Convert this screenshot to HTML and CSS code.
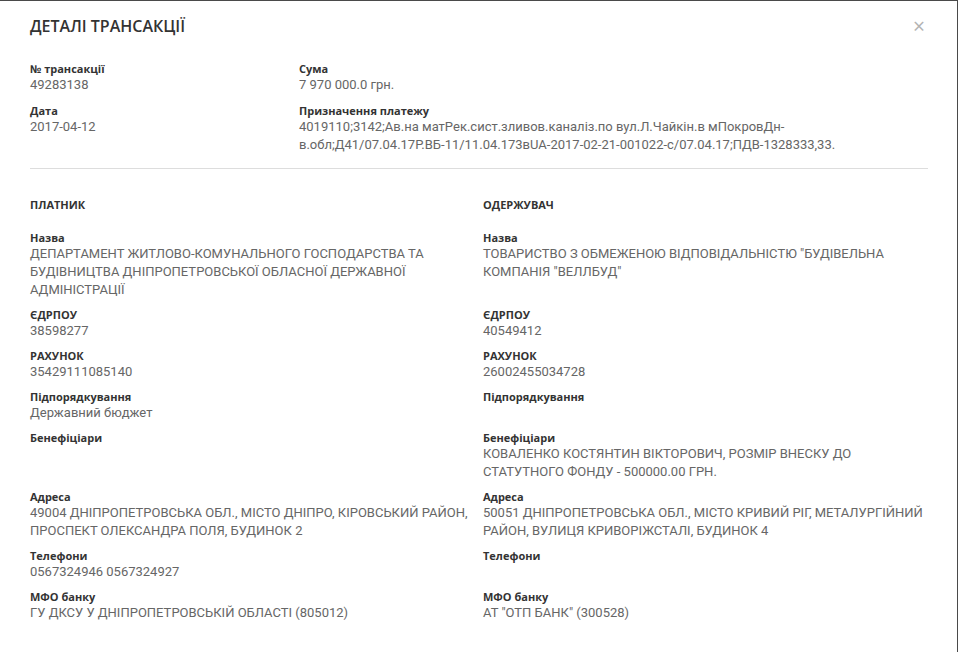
FILE: index.html
```html
<!DOCTYPE html>
<html lang="uk">
<head>
    <meta charset="UTF-8">
    <meta name="viewport" content="width=device-width, initial-scale=1.0">
    <title>Деталі трансакції</title>
    <link rel="stylesheet" href="styles.css">
</head>
<body>
    <div class="modal">
        <div class="modal-header">
            <h2 class="modal-title">ДЕТАЛІ ТРАНСАКЦІЇ</h2>
            <button class="close">&times;</button>
        </div>

        <div class="summary">
            <div class="summary-col">
                <div class="field">
                    <div class="label">№ трансакції</div>
                    <div class="value">49283138</div>
                </div>
                <div class="field">
                    <div class="label">Дата</div>
                    <div class="value">2017-04-12</div>
                </div>
            </div>
            <div class="summary-col">
                <div class="field">
                    <div class="label">Сума</div>
                    <div class="value">7 970 000.0 грн.</div>
                </div>
                <div class="field">
                    <div class="label">Призначення платежу</div>
                    <div class="value">4019110;3142;Ав.на матРек.сист.зливов.каналіз.по вул.Л.Чайкін.в мПокровДн-в.обл;Д41/07.04.17Р.ВБ-11/11.04.173вUA-2017-02-21-001022-с/07.04.17;ПДВ-1328333,33.</div>
                </div>
            </div>
        </div>

        <hr class="divider">

        <div class="parties">
            <div class="party-title">ПЛАТНИК</div>
            <div class="party-title">ОДЕРЖУВАЧ</div>

            <div class="field">
                <div class="label">Назва</div>
                <div class="value">ДЕПАРТАМЕНТ ЖИТЛОВО-КОМУНАЛЬНОГО ГОСПОДАРСТВА ТА БУДІВНИЦТВА ДНІПРОПЕТРОВСЬКОЇ ОБЛАСНОЇ ДЕРЖАВНОЇ АДМІНІСТРАЦІЇ</div>
            </div>
            <div class="field">
                <div class="label">Назва</div>
                <div class="value">ТОВАРИСТВО З ОБМЕЖЕНОЮ ВІДПОВІДАЛЬНІСТЮ "БУДІВЕЛЬНА КОМПАНІЯ "ВЕЛЛБУД"</div>
            </div>

            <div class="field">
                <div class="label">ЄДРПОУ</div>
                <div class="value">38598277</div>
            </div>
            <div class="field">
                <div class="label">ЄДРПОУ</div>
                <div class="value">40549412</div>
            </div>

            <div class="field">
                <div class="label">РАХУНОК</div>
                <div class="value">35429111085140</div>
            </div>
            <div class="field">
                <div class="label">РАХУНОК</div>
                <div class="value">26002455034728</div>
            </div>

            <div class="field">
                <div class="label">Підпорядкування</div>
                <div class="value">Державний бюджет</div>
            </div>
            <div class="field">
                <div class="label">Підпорядкування</div>
                <div class="value"></div>
            </div>

            <div class="field">
                <div class="label">Бенефіціари</div>
                <div class="value"></div>
            </div>
            <div class="field">
                <div class="label">Бенефіціари</div>
                <div class="value">КОВАЛЕНКО КОСТЯНТИН ВІКТОРОВИЧ, РОЗМІР ВНЕСКУ ДО СТАТУТНОГО ФОНДУ - 500000.00 ГРН.</div>
            </div>

            <div class="field">
                <div class="label">Адреса</div>
                <div class="value">49004 ДНІПРОПЕТРОВСЬКА ОБЛ., МІСТО ДНІПРО, КІРОВСЬКИЙ РАЙОН, ПРОСПЕКТ ОЛЕКСАНДРА ПОЛЯ, БУДИНОК 2</div>
            </div>
            <div class="field">
                <div class="label">Адреса</div>
                <div class="value">50051 ДНІПРОПЕТРОВСЬКА ОБЛ., МІСТО КРИВИЙ РІГ, МЕТАЛУРГІЙНИЙ РАЙОН, ВУЛИЦЯ КРИВОРІЖСТАЛІ, БУДИНОК 4</div>
            </div>

            <div class="field">
                <div class="label">Телефони</div>
                <div class="value">0567324946 0567324927</div>
            </div>
            <div class="field">
                <div class="label">Телефони</div>
                <div class="value"></div>
            </div>

            <div class="field">
                <div class="label">МФО банку</div>
                <div class="value">ГУ ДКСУ У ДНІПРОПЕТРОВСЬКІЙ ОБЛАСТІ (805012)</div>
            </div>
            <div class="field">
                <div class="label">МФО банку</div>
                <div class="value">АТ "ОТП БАНК" (300528)</div>
            </div>
        </div>
    </div>
</body>
</html>
```

FILE: styles.css
```css
body {
    margin: 0;
    background: #fff;
    font-family: 'Open Sans', 'DejaVu Sans', sans-serif;
    color: #333;
}

.modal {
    box-sizing: border-box;
    width: 958px;
    height: 652px;
    padding: 15px 29px 0 30px;
    background: #fff;
    border-top: 1px solid #4a4a4a;
    border-right: 1px solid #4a4a4a;
    overflow: hidden;
}

.modal-header {
    display: flex;
    justify-content: space-between;
    align-items: center;
}

.modal-title {
    margin: 0;
    font-size: 16px;
    line-height: 20px;
    font-weight: 600;
    color: #333;
}

.close {
    background: none;
    border: none;
    padding: 0;
    margin-right: 3px;
    font-family: 'Open Sans', sans-serif;
    font-size: 21px;
    line-height: 20px;
    color: #b3b3b3;
    cursor: pointer;
}

.summary {
    display: grid;
    grid-template-columns: 269px 1fr;
    margin-top: 26px;
}

.summary-col {
    display: flex;
    flex-direction: column;
    gap: 10px;
}

.label {
    font-size: 11px;
    line-height: 14px;
    font-weight: 700;
    color: #333;
}

.value {
    font-family: 'Roboto', 'Open Sans', sans-serif;
    font-size: 13px;
    line-height: 18px;
    color: #666;
    min-height: 18px;
}

.divider {
    border: none;
    border-top: 1px solid #ddd;
    margin: 14px 0 29px 0;
}

.parties {
    display: grid;
    grid-template-columns: 1fr 1fr;
    column-gap: 8px;
    row-gap: 9px;
}

.party-title {
    font-size: 11px;
    line-height: 14px;
    font-weight: 700;
    color: #333;
    margin-bottom: 10px;
}
```
